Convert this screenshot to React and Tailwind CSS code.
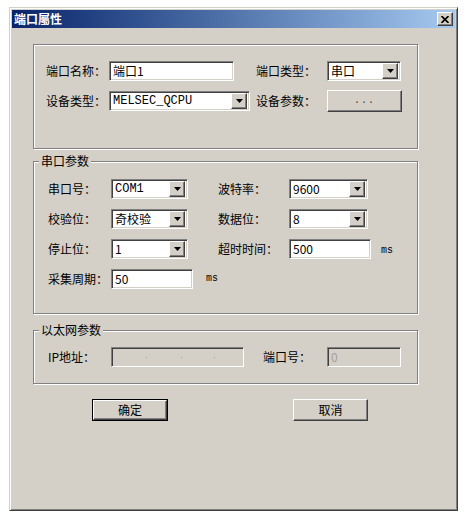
import React from "react";

const cjk = { fontFamily: '"Noto Sans CJK SC", "Liberation Sans", sans-serif' };
const mono = { fontFamily: '"Liberation Mono", "Noto Sans CJK SC", monospace' };

const raised =
  "border border-t-white border-l-white border-r-[#404040] border-b-[#404040] shadow-[inset_-1px_-1px_0_#808080]";
const sunken =
  "border border-t-[#808080] border-l-[#808080] border-r-white border-b-white shadow-[inset_1px_1px_0_#404040,inset_-1px_-1px_0_#d4d0c8]";

function Arrow() {
  return (
    <div className={`w-[16px] h-[16px] bg-[#d4d0c8] flex items-center justify-center shrink-0 ${raised}`}>
      <svg width="7" height="4" viewBox="0 0 7 4">
        <polygon points="0,0 7,0 3.5,4" fill="#000" />
      </svg>
    </div>
  );
}

function Select({ w, h = "h-[20px]", value, font = cjk }) {
  return (
    <div className={`${w} ${h} bg-white ${sunken} flex items-center justify-between pl-[3px] pr-[2px]`}>
      <span className="text-[12px] leading-none text-black" style={font}>{value}</span>
      <Arrow />
    </div>
  );
}

function Input({ w, value, font = cjk, disabled = false }) {
  return (
    <div className={`${w} h-[20px] ${disabled ? "bg-[#d4d0c8]" : "bg-white"} ${sunken} flex items-center pl-[3px]`}>
      <span className={`text-[12px] leading-none ${disabled ? "text-[#a0a0a0]" : "text-black"}`} style={font}>{value}</span>
    </div>
  );
}

function Label({ w, children, className = "" }) {
  return (
    <span className={`${w} shrink-0 text-[12px] leading-none text-black ${className}`} style={cjk}>
      {children}
    </span>
  );
}

function Group({ title, className, children }) {
  return (
    <div className={`relative w-[385px] border border-[#808080] shadow-[inset_1px_1px_0_#fff,1px_1px_0_#fff] ${className}`}>
      {title && (
        <span
          className="absolute left-[5px] top-[-9px] bg-[#d4d0c8] px-[2px] text-[12px] leading-[16px] text-black"
          style={cjk}
        >
          {title}
        </span>
      )}
      {children}
    </div>
  );
}

export default function App() {
  return (
    <div className="w-[467px] h-[520px] bg-white pt-[7px] pl-[9px]">
      <div className="w-[449px] h-[504px] bg-[#d4d0c8] border border-t-[#d4d0c8] border-l-[#d4d0c8] border-r-[#404040] border-b-[#404040] shadow-[inset_1px_1px_0_#fff,inset_-1px_-1px_0_#808080] p-[2px]">
        {/* title bar */}
        <div className="h-[18px] bg-gradient-to-r from-[#0a246a] to-[#a6caf0] flex items-center justify-between pl-[2px] pr-[2px]">
          <span className="text-[12px] font-bold text-white leading-none" style={cjk}>端口屬性</span>
          <div className={`w-[16px] h-[14px] bg-[#d4d0c8] flex items-center justify-center ${raised}`}>
            <svg width="8" height="7" viewBox="0 0 8 7">
              <path d="M0.5 0 L7.5 7 M7.5 0 L0.5 7" stroke="#000" strokeWidth="1.6" />
            </svg>
          </div>
        </div>

        <div className="pl-[21px] pt-[16px] flex flex-col">
          {/* group 1 */}
          <Group className="h-[105px] pt-[16px] pl-[12px]">
            <div className="flex items-center h-[20px]">
              <Label w="w-[63px]">端口名称：</Label>
              <Input w="w-[125px]" value="端口1" />
              <Label w="w-[71px]" className="ml-[22px]">端口类型：</Label>
              <Select w="w-[74px]" value="串口" />
            </div>
            <div className="flex items-center h-[22px] mt-[9px]">
              <Label w="w-[63px]">设备类型：</Label>
              <Select w="w-[141px]" value="MELSEC_QCPU" font={mono} />
              <Label w="w-[71px]" className="ml-[6px]">设备参数：</Label>
              <div className={`w-[75px] h-[22px] bg-[#d4d0c8] ${raised} flex items-center justify-center`}>
                <span className="text-[10px] leading-none text-[#404040] tracking-[1px]" style={mono}>...</span>
              </div>
            </div>
          </Group>

          {/* group 2 */}
          <Group title="串口参数" className="mt-[12px] h-[153px] pt-[17px] pl-[14px]">
            <div className="flex flex-col gap-[10px]">
              <div className="flex items-center h-[20px]">
                <Label w="w-[63px]">串口号：</Label>
                <Select w="w-[77px]" value="COM1" font={mono} />
                <Label w="w-[71px]" className="ml-[30px]">波特率：</Label>
                <Select w="w-[79px]" value="9600" />
              </div>
              <div className="flex items-center h-[20px]">
                <Label w="w-[63px]">校验位：</Label>
                <Select w="w-[77px]" value="奇校验" />
                <Label w="w-[71px]" className="ml-[30px]">数据位：</Label>
                <Select w="w-[79px]" value="8" />
              </div>
              <div className="flex items-center h-[20px]">
                <Label w="w-[63px]">停止位：</Label>
                <Select w="w-[77px]" value="1" />
                <Label w="w-[71px]" className="ml-[30px]">超时时间：</Label>
                <Input w="w-[82px]" value="500" />
                <span className="ml-[10px] mt-[4px] text-[10px] leading-none text-black" style={mono}>ms</span>
              </div>
              <div className="flex items-center h-[20px]">
                <Label w="w-[63px]">采集周期：</Label>
                <Input w="w-[82px]" value="50" />
                <span className="ml-[13px] text-[10px] leading-none text-black" style={mono}>ms</span>
              </div>
            </div>
          </Group>

          {/* group 3 */}
          <Group title="以太网参数" className="mt-[16px] h-[54px] pt-[16px] pl-[14px]">
            <div className="flex items-center h-[20px]">
              <Label w="w-[63px]">IP地址：</Label>
              <div className={`w-[133px] h-[20px] bg-[#d4d0c8] ${sunken} flex items-center`}>
                <span className="ml-[34px] w-[1px] h-[1px] bg-[#a0a0a0]" />
                <span className="ml-[34px] w-[1px] h-[1px] bg-[#a0a0a0]" />
                <span className="ml-[32px] w-[1px] h-[1px] bg-[#a0a0a0]" />
              </div>
              <Label w="w-[64px]" className="ml-[19px]">端口号：</Label>
              <Input w="w-[74px]" value="0" disabled />
            </div>
          </Group>

          {/* buttons */}
          <div className="flex mt-[15px] pl-[59px]">
            <div className="w-[76px] h-[22px] border border-black">
              <div className={`w-full h-full bg-[#d4d0c8] ${raised} flex items-center justify-center`}>
                <span className="text-[12px] leading-none text-black" style={cjk}>确定</span>
              </div>
            </div>
            <div className={`ml-[125px] w-[75px] h-[22px] bg-[#d4d0c8] ${raised} flex items-center justify-center`}>
              <span className="text-[12px] leading-none text-black" style={cjk}>取消</span>
            </div>
          </div>
        </div>
      </div>
    </div>
  );
}
